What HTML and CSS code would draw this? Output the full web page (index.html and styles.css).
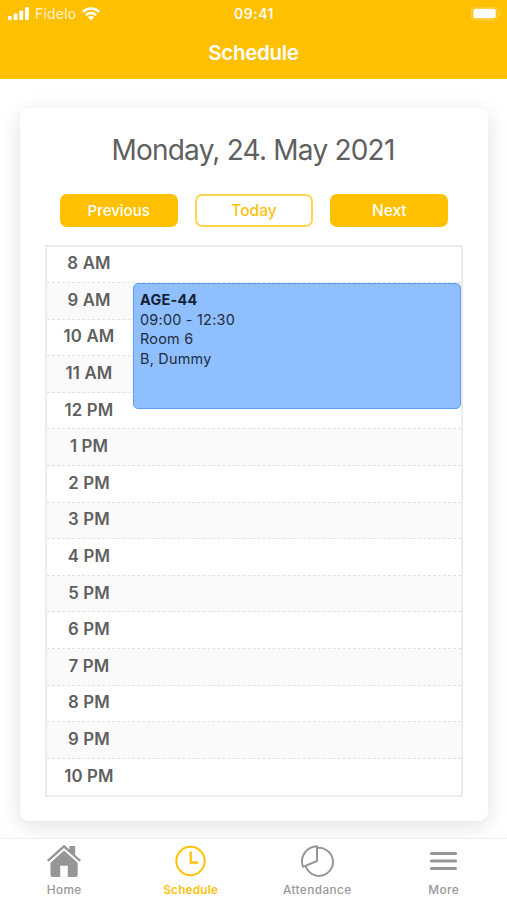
FILE: index.html
```html
<!DOCTYPE html>
<html lang="en">
<head>
<meta charset="utf-8">
<title>Schedule</title>
<link rel="stylesheet" href="styles.css">
</head>
<body>
<header class="header">
  <div class="status">
    <div class="carrier">
      <svg width="22" height="14" viewBox="0 0 22 14" fill="#fff"><rect x="0" y="9" width="3.8" height="4" rx="1"/><rect x="5.7" y="6.5" width="3.8" height="6.5" rx="1"/><rect x="11.4" y="3.5" width="3.8" height="9.5" rx="1"/><rect x="17.1" y="0" width="3.8" height="13" rx="1"/></svg>
      <span class="carrier-name">Fidelo</span>
      <svg width="18" height="14" viewBox="0 0 18 14" fill="none" stroke="#fff" stroke-width="2.4"><path d="M.9 4.8a11.6 11.6 0 0 1 16.2 0M3.9 8.1a7.3 7.3 0 0 1 10.2 0"/><path d="M9 13.3l-3-3a4.3 4.3 0 0 1 6 0z" fill="#fff" stroke="none"/></svg>
    </div>
    <span class="time">09:41</span>
    <svg class="battery" width="31" height="14" viewBox="0 0 31 14"><rect x=".7" y=".2" width="25.6" height="12.6" rx="3.5" fill="none" stroke="#fff" stroke-opacity=".25" stroke-width="1.2"/><rect x="2.3" y="1.8" width="22.4" height="9.4" rx="2" fill="#fff"/><path d="M27.8 4c2.5 1 2.5 4 0 5z" fill="#fff" opacity=".35"/></svg>
  </div>
  <h1 class="title">Schedule</h1>
</header>
<main class="content">
  <section class="card">
    <h2 class="date">Monday, 24. May 2021</h2>
    <div class="buttons">
      <button class="button">Previous</button>
      <button class="button outline">Today</button>
      <button class="button">Next</button>
    </div>
    <div class="calendar">
      <div class="hour"><span>8 AM</span></div>
      <div class="hour"><span>9 AM</span></div>
      <div class="hour"><span>10 AM</span></div>
      <div class="hour"><span>11 AM</span></div>
      <div class="hour"><span>12 PM</span></div>
      <div class="hour"><span>1 PM</span></div>
      <div class="hour"><span>2 PM</span></div>
      <div class="hour"><span>3 PM</span></div>
      <div class="hour"><span>4 PM</span></div>
      <div class="hour"><span>5 PM</span></div>
      <div class="hour"><span>6 PM</span></div>
      <div class="hour"><span>7 PM</span></div>
      <div class="hour"><span>8 PM</span></div>
      <div class="hour"><span>9 PM</span></div>
      <div class="hour"><span>10 PM</span></div>
      <article class="event">
        <strong>AGE-44</strong>
        <span>09:00 - 12:30</span>
        <span>Room 6</span>
        <span>B, Dummy</span>
      </article>
    </div>
  </section>
</main>
<nav class="tabs">
  <a class="tab">
    <svg width="36" height="34" viewBox="0 0 36 34" fill="#969696"><path d="M1 16.1 17.1 1.4q.9-.8 1.8 0l4.5 4.1V2h5.8v8.9L35 16.1l-1.5 1.7L18 4 2.5 17.8z"/><path d="M18 6.6 31.7 18.7V31q0 2-2 2H21.8V21.8h-7.6V33H6.5q-2 0-2-2V18.7z"/></svg>
    <span>Home</span>
  </a>
  <a class="tab active">
    <svg width="36" height="34" viewBox="0 0 36 34" fill="none" stroke="#ffc20e" stroke-width="2"><circle cx="17.5" cy="17" r="14.2"/><path d="M17.7 7.6v10.9h7.5" stroke-width="2.3"/></svg>
    <span>Schedule</span>
  </a>
  <a class="tab">
    <svg width="36" height="34" viewBox="0 0 36 34" fill="none" stroke="#969696" stroke-width="2" stroke-linejoin="round"><path d="M18 2.2A15.3 15.3 0 0 0 4 22.9L18 17z"/><path d="M18 4a14 14 0 1 1-11.5 17.6"/></svg>
    <span>Attendance</span>
  </a>
  <a class="tab">
    <svg width="36" height="34" viewBox="0 0 36 34" stroke="#969696" stroke-width="3.2" stroke-linecap="round"><path d="M5.5 9.5h24M5.5 17h24M5.5 24.5h24"/></svg>
    <span>More</span>
  </a>
</nav>
</body>
</html>
```
FILE: styles.css
```css
* { box-sizing: border-box; }
body {
  margin: 0;
  height: 900px;
  display: flex;
  flex-direction: column;
  overflow: hidden;
  background: #fff;
  font-family: Inter, "Liberation Sans", sans-serif;
  color: #5f5f5f;
}
.header { height: 79px; flex: none; background: #ffc001; color: #fff; }
.status {
  display: grid;
  grid-template-columns: 1fr auto 1fr;
  align-items: center;
  height: 27px;
  padding: 0 5px 0 8px;
}
.carrier { display: flex; align-items: center; gap: 5px; }
.carrier-name { font-size: 14px; letter-spacing: .2px; opacity: .8; margin-right: 1px; }
.time { font-size: 14px; font-weight: 600; letter-spacing: .5px; opacity: .92; margin-right: 2px; }
.battery { justify-self: end; }
.title { margin: 0; font-size: 20.5px; line-height: 51px; font-weight: 600; text-align: center; letter-spacing: -.3px; }
.content { flex: 1; padding: 29px 19px 0 20px; overflow: hidden; }
.card {
  height: 713px;
  padding: 22px 25px 24px;
  border-radius: 9px;
  background: #fff;
  box-shadow: 0 5px 22px rgba(0, 0, 0, .12);
}
.date { margin: 0; font-size: 28px; line-height: 41px; font-weight: 400; text-align: center; letter-spacing: -.78px; padding-right: 2px; }
.buttons { display: flex; gap: 17px; margin: 23px 14.5px 17.5px; }
.button {
  flex: 1;
  height: 33px;
  padding: 0;
  border: 2px solid #ffc001;
  border-radius: 7px;
  background: #ffc001;
  color: #fff;
  font: 500 15.5px/29px Inter, sans-serif;
}
.outline { background: #fff; border-color: #ffd452; color: #ffc20e; }
.button:first-child { font-size: 15px; }
.calendar {
  position: relative;
  height: 552px;
  display: flex;
  flex-direction: column;
  border: 2px solid #ececec;
}
.hour { flex: 1; display: flex; align-items: center; padding-bottom: 2px; border-bottom: 1px dashed #e2e2e2; }
.hour:nth-child(even) { background: #fafafa; }
.hour:nth-child(15) { border-bottom: 0; }
.hour span { width: 84px; text-align: center; font-size: 16.8px; font-weight: 600; letter-spacing: .15px; }
.event {
  position: absolute;
  left: 86px;
  right: 0;
  top: 36.5px;
  height: 126px;
  padding: 6px;
  display: flex;
  flex-direction: column;
  border: 1.5px solid #5a9ff5;
  border-radius: 5px;
  background: #8fbfff;
  color: #1d2c42;
  font-size: 14.4px;
  line-height: 19.5px;
  letter-spacing: .25px;
}
.event strong { font-weight: 700; color: #142033; }
.tabs {
  flex: none;
  height: 62px;
  display: grid;
  grid-template-columns: repeat(4, 1fr);
  padding-left: 1px;
  border-top: 1px solid #ededed;
  background: #fff;
}
.tab { display: flex; flex-direction: column; align-items: center; padding-top: 5px; color: #979797; }
.tab span { font-size: 11.8px; line-height: 14px; margin-top: 5px; font-weight: 500; letter-spacing: .4px; }
.active { color: #ffc20e; }
.tab.active span { font-weight: 600; letter-spacing: .2px; }
```
